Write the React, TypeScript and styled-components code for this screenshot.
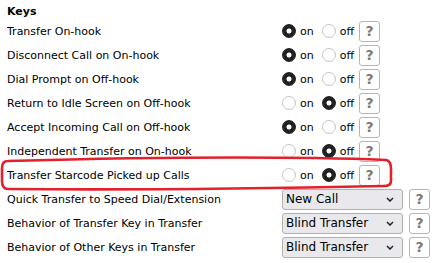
import React, { useState } from "react";
import styled, { createGlobalStyle } from "styled-components";

const GlobalStyle = createGlobalStyle`
  html, body {
    margin: 0;
    padding: 0;
    background: #ffffff;
  }
  body {
    font-family: "DejaVu Sans", Verdana, sans-serif;
    font-size: 11px;
    color: #000000;
  }
`;

const Panel = styled.div`
  position: relative;
  width: 436px;
  padding: 4px 0 0 7px;
  box-sizing: border-box;
`;

const Title = styled.div`
  font-weight: 700;
  height: 15px;
  line-height: 15px;
`;

const Rows = styled.div`
  display: flex;
  flex-direction: column;
`;

const Row = styled.div`
  display: grid;
  grid-template-columns: 275px auto;
  align-items: center;
  height: 24px;
`;

const Label = styled.span`
  white-space: nowrap;
  overflow: hidden;
`;

const Control = styled.div`
  display: flex;
  align-items: center;
`;

const RadioLabel = styled.label`
  display: flex;
  align-items: center;
  gap: 4px;
  margin-right: 8px;
  cursor: pointer;
`;

const Radio = styled.input.attrs({ type: "radio" })`
  appearance: none;
  margin: 0;
  width: 14px;
  height: 14px;
  border-radius: 50%;
  border: 1px solid #c4c4c4;
  background: #ffffff;
  box-sizing: border-box;

  &:checked {
    border-color: #222222;
    background: radial-gradient(circle, #ffffff 0 2.2px, #222222 2.8px);
  }
`;

const Help = styled.button<{ $gap: number }>`
  width: 21px;
  height: 21px;
  padding: 0;
  margin-left: ${(p) => p.$gap}px;
  border: 1px solid #b5b5b5;
  border-radius: 3px;
  background: #ffffff;
  color: #7a7a7a;
  font-family: "DejaVu Sans", Verdana, sans-serif;
  font-weight: 700;
  font-size: 14px;
  line-height: 19px;
  text-align: center;
  cursor: pointer;
`;

const SelectWrap = styled.div`
  position: relative;
  width: 121px;
  height: 21px;
`;

const Select = styled.select`
  appearance: none;
  width: 100%;
  height: 100%;
  margin: 0;
  padding: 0 18px 0 3px;
  border: 1px solid #b0b0b5;
  border-radius: 3px;
  background: #e9e9ed;
  color: #000000;
  font-family: "DejaVu Sans", Verdana, sans-serif;
  font-weight: 400;
  font-size: 12px;
`;

const Chevron = styled.svg`
  position: absolute;
  right: 9px;
  top: 8px;
  pointer-events: none;
`;

const Highlight = styled.svg`
  position: absolute;
  left: 0;
  top: 0;
  pointer-events: none;
`;

type Item =
  | { label: string; kind: "toggle"; on: boolean }
  | { label: string; kind: "select"; value: string; options: string[] };

const transferOptions = ["New Call", "Blind Transfer", "Attended Transfer"];

const items: Item[] = [
  { label: "Transfer On-hook", kind: "toggle", on: true },
  { label: "Disconnect Call on On-hook", kind: "toggle", on: true },
  { label: "Dial Prompt on Off-hook", kind: "toggle", on: true },
  { label: "Return to Idle Screen on Off-hook", kind: "toggle", on: false },
  { label: "Accept Incoming Call on Off-hook", kind: "toggle", on: true },
  { label: "Independent Transfer on On-hook", kind: "toggle", on: false },
  { label: "Transfer Starcode Picked up Calls", kind: "toggle", on: false },
  { label: "Quick Transfer to Speed Dial/Extension", kind: "select", value: "New Call", options: transferOptions },
  { label: "Behavior of Transfer Key in Transfer", kind: "select", value: "Blind Transfer", options: transferOptions },
  { label: "Behavior of Other Keys in Transfer", kind: "select", value: "Blind Transfer", options: transferOptions },
];

function Toggle({ name, initial }: { name: string; initial: boolean }) {
  const [on, setOn] = useState(initial);
  return (
    <>
      <RadioLabel>
        <Radio name={name} checked={on} onChange={() => setOn(true)} />
        on
      </RadioLabel>
      <RadioLabel>
        <Radio name={name} checked={!on} onChange={() => setOn(false)} />
        off
      </RadioLabel>
    </>
  );
}

export default function App() {
  return (
    <>
      <GlobalStyle />
      <Panel>
        <Title>Keys</Title>
        <Rows>
          {items.map((item, i) => (
            <Row key={item.label}>
              <Label>{item.label}</Label>
              <Control>
                {item.kind === "toggle" ? (
                  <>
                    <Toggle name={`key-${i}`} initial={item.on} />
                    <Help $gap={-3}>?</Help>
                  </>
                ) : (
                  <>
                    <SelectWrap>
                      <Select defaultValue={item.value}>
                        {item.options.map((o) => (
                          <option key={o}>{o}</option>
                        ))}
                      </Select>
                      <Chevron width="8" height="5" viewBox="0 0 8 5">
                        <path d="M1 1 L4 4 L7 1" fill="none" stroke="#222" strokeWidth="1.5" />
                      </Chevron>
                    </SelectWrap>
                    <Help $gap={6}>?</Help>
                  </>
                )}
              </Control>
            </Row>
          ))}
        </Rows>
        <Highlight width="436" height="263" viewBox="0 0 436 263">
          <path
            d="M8 161 C 120 158, 280 156, 386 160 Q 391 161 391 169 L 391 181 Q 391 186 384 186 C 290 188, 120 190, 8 189 Q 2 189 2 181 L 2 168 Q 2 161 8 161 Z"
            fill="none"
            stroke="#e3202b"
            strokeWidth="2.6"
          />
        </Highlight>
      </Panel>
    </>
  );
}
